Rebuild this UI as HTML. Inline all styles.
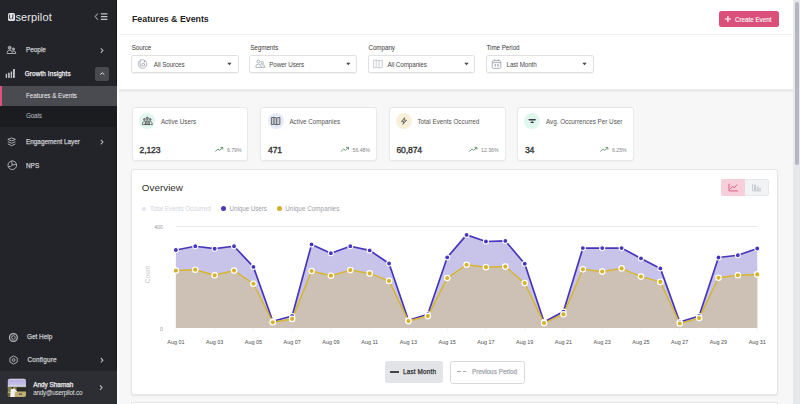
<!DOCTYPE html>
<html><head><meta charset="utf-8">
<style>
*{box-sizing:border-box;margin:0;padding:0}
html,body{width:800px;height:404px;overflow:hidden;background:#f7f7f7;font-family:"Liberation Sans",sans-serif}
.a{position:absolute;white-space:nowrap;line-height:1}
svg.a{overflow:visible}
.nav{position:absolute;white-space:nowrap;line-height:1;left:26px;font-size:6.4px;font-weight:normal;color:#c8c9cd;-webkit-text-stroke:0.25px currentColor}
.lbl{position:absolute;white-space:nowrap;line-height:1;top:45.2px;font-size:6.3px;color:#3a3a3a;letter-spacing:-0.06px}
.sel{position:absolute;top:55.3px;width:107.6px;height:17.4px;border:1px solid #e0e0e0;border-radius:2.5px;background:#fff;box-shadow:0 0.5px 0.8px rgba(0,0,0,0.05)}
.selt{position:absolute;white-space:nowrap;line-height:1;top:62.1px;font-size:6.3px;color:#4a4a4a;letter-spacing:-0.1px}
.tri{position:absolute;top:62.9px;width:0;height:0;border-left:2.2px solid transparent;border-right:2.2px solid transparent;border-top:2.5px solid #454545}
.card{position:absolute;top:107.3px;width:116.7px;height:54px;background:#fff;border-radius:3px;border:1px solid #e8e8e8;box-shadow:0 1px 1.5px rgba(0,0,0,0.04)}
.ic{position:absolute;top:113px;width:16px;height:16px;border-radius:50%}
.tt{position:absolute;white-space:nowrap;line-height:1;top:118.6px;font-size:6.3px;color:#555}
.v{position:absolute;white-space:nowrap;line-height:1;top:146.2px;font-size:8.6px;font-weight:normal;color:#333;letter-spacing:-0.12px;-webkit-text-stroke:0.35px #333}
.pc{position:absolute;white-space:nowrap;line-height:1;top:147.6px;font-size:5.2px;color:#858585}
</style></head><body>

<!-- ============ SIDEBAR ============ -->
<div class="a" style="left:0;top:0;width:117px;height:404px;background:#232429"></div>
<div class="a" style="left:116px;top:0;width:1px;height:404px;background:#16171a"></div>
<div class="a" style="left:117px;top:0;width:2px;height:404px;background:#fdfdfd"></div>

<!-- logo -->
<div class="a" style="left:7.8px;top:12.8px;width:7.4px;height:8px;background:#e4e4e6;border-radius:1.6px"></div>
<svg class="a" style="left:0;top:0" width="30" height="30"><path d="M9.6,14.6 L9.3,18.3 Q10.2,19.6 11.4,18.4 M12.9,14.4 L12.6,19.2" stroke="#2a2b30" stroke-width="0.9" fill="none"/></svg>
<div class="a" style="left:15.4px;top:11.6px;font-size:11px;color:#e6e6e8;letter-spacing:0.12px">serpilot</div>

<!-- collapse icon -->
<svg class="a" style="left:0;top:0" width="117" height="30"><path d="M97.9,13.4 L95.1,16.6 L97.9,19.8" stroke="#c5c5ca" stroke-width="1" fill="none"/>
<path d="M100.9,13.9 H107.4 M100.9,16.6 H107.4 M100.9,19.4 H107.4" stroke="#c5c5ca" stroke-width="1.1" fill="none"/></svg>

<!-- People -->
<svg class="a" style="left:0;top:0" width="20" height="60"><g stroke="#b3b4b9" stroke-width="0.9" fill="none">
<circle cx="9.7" cy="47.8" r="1.5" fill="#8d8e93"/><path d="M7.2,53.5 V52.4 Q7.2,50.2 9.7,50.2 Q12.2,50.2 12.2,52.4 V53.5 Z"/>
<circle cx="13.5" cy="49.1" r="1.1" fill="#8d8e93"/><path d="M12.4,50.9 Q15.9,50.6 15.9,53.5 H12.2"/></g></svg>
<div class="nav" style="top:47.4px">People</div>
<svg class="a" style="left:0;top:0" width="117" height="60"><path d="M100.8,48.4 L102.9,50.6 L100.8,52.8" stroke="#b4b5b9" stroke-width="1.1" fill="none"/></svg>

<!-- Growth Insights -->
<svg class="a" style="left:0;top:0" width="20" height="80"><g fill="#c2c3c8">
<rect x="5.7" y="73.8" width="1.4" height="4.1"/><rect x="8.1" y="72.7" width="1.6" height="5.2"/><rect x="10.7" y="71.5" width="1.4" height="6.4"/><rect x="13" y="69" width="1.9" height="8.9"/></g></svg>
<div class="nav" style="left:24.8px;top:70.6px;color:#ececee;letter-spacing:0.1px">Growth Insights</div>
<div class="a" style="left:95.3px;top:66.6px;width:14px;height:14px;background:#494a50;border-radius:2px"></div>
<svg class="a" style="left:0;top:0" width="117" height="90"><path d="M100.3,74.6 L102.3,72.8 L104.3,74.6" stroke="#e2e2e5" stroke-width="1" fill="none"/></svg>

<!-- Features & Events (active) -->
<div class="a" style="left:0;top:86px;width:117px;height:20px;background:#4a4b51"></div>
<div class="a" style="left:0;top:86px;width:1.6px;height:20px;background:#e0517d"></div>
<div class="nav" style="top:92.6px;color:#f2f2f3;font-size:6.3px;letter-spacing:-0.05px;-webkit-text-stroke:0">Features &amp; Events</div>
<!-- Goals -->
<div class="a" style="left:0;top:106px;width:117px;height:20.6px;background:#1b1c20"></div>
<div class="nav" style="top:113.3px;color:#bfc0c4;font-size:6.3px;letter-spacing:-0.15px;-webkit-text-stroke:0">Goals</div>

<!-- Engagement Layer -->
<svg class="a" style="left:0;top:0" width="20" height="150"><g stroke="#b9babe" stroke-width="0.9" fill="none" stroke-linejoin="round">
<path d="M11.6,137.9 L15.4,139.4 L11.6,140.9 L7.8,139.4 Z"/><path d="M7.8,141.6 L11.6,143.3 L15.4,141.6"/><path d="M7.8,143.9 L11.6,145.7 L15.4,143.9"/></g></svg>
<div class="nav" style="top:139.2px">Engagement Layer</div>
<svg class="a" style="left:0;top:0" width="117" height="150"><path d="M100.8,139.9 L102.9,142.1 L100.8,144.3" stroke="#b4b5b9" stroke-width="1.1" fill="none"/></svg>

<!-- NPS -->
<svg class="a" style="left:0;top:0" width="20" height="175"><g stroke="#b9babe" stroke-width="0.9" fill="none">
<circle cx="12.3" cy="165.2" r="4.3"/><path d="M11.6,161 L12.3,165.2 L16.4,164 M12.3,165.2 Q10.5,167.4 8.4,166.4"/></g></svg>
<div class="nav" style="top:162.6px">NPS</div>

<!-- Get Help -->
<svg class="a" style="left:0;top:0" width="22" height="370"><g stroke="#b9babe" fill="none">
<circle cx="13.4" cy="337.5" r="3.9" stroke-width="1.3"/><circle cx="13.4" cy="337.5" r="1.8" stroke-width="1"/>
<path d="M11.3,335.4 L12.1,336.2 M15.5,335.4 L14.7,336.2 M11.3,339.6 L12.1,338.8 M15.5,339.6 L14.7,338.8" stroke-width="0.8" stroke="#5a5b60"/></g></svg>
<div class="nav" style="left:27px;top:334.4px">Get Help</div>

<!-- Configure -->
<svg class="a" style="left:0;top:0" width="22" height="370"><g stroke="#b9babe" fill="none" stroke-width="0.9">
<path d="M13.6,355.9 L17.3,358 L17.3,362 L13.6,364.1 L9.9,362 L9.9,358 Z"/><circle cx="13.6" cy="360" r="1.4"/></g></svg>
<div class="nav" style="left:27.4px;top:356.9px;letter-spacing:0.18px">Configure</div>
<svg class="a" style="left:0;top:0" width="117" height="370"><path d="M100.8,358 L102.9,360.2 L100.8,362.4" stroke="#b4b5b9" stroke-width="1.1" fill="none"/></svg>

<!-- profile -->
<div class="a" style="left:0;top:371px;width:117px;height:33px;background:#2c2e33"></div>
<svg class="a" style="left:0;top:0" width="40" height="404">
<defs><clipPath id="av"><rect x="7.8" y="378.7" width="18.2" height="18.3" rx="2"/></clipPath>
<linearGradient id="sky" x1="0" y1="0" x2="0" y2="1"><stop offset="0" stop-color="#ecebf6"/><stop offset="0.3" stop-color="#b9b0e3"/><stop offset="0.75" stop-color="#c6c0e6"/><stop offset="1" stop-color="#dfe2ec"/></linearGradient></defs>
<g clip-path="url(#av)">
<rect x="7" y="378" width="20" height="8.6" fill="url(#sky)"/>
<rect x="7" y="386.2" width="20" height="1.2" fill="#c2cbd2"/>
<rect x="7" y="387.3" width="20" height="4.5" fill="#8c8146"/>
<rect x="16.5" y="387.3" width="10" height="4.3" fill="#2b2a24"/>
<rect x="7" y="391.6" width="20" height="6" fill="#c0ad74"/>
<rect x="7" y="393" width="3.5" height="5" fill="#6f6638"/>
<rect x="19" y="393.5" width="3" height="1.2" fill="#5a4d35"/>
<path d="M10.3,397.5 L10.8,389.6 Q12.5,387.6 14.6,388.8 L17.2,391.4 L15.6,392.6 L14.8,390.8 L14.6,397.5 Z" fill="#f2f2f2"/>
<circle cx="12.4" cy="387.9" r="0.9" fill="#3a2a20"/>
</g></svg>
<div class="nav" style="left:33.2px;top:381.5px;color:#ededee">Andy Shamah</div>
<div class="nav" style="left:33.2px;top:389.6px;font-size:6.3px;letter-spacing:-0.19px;color:#e2e2e4;-webkit-text-stroke:0">andy@userpilot.co</div>
<svg class="a" style="left:0;top:0" width="117" height="404"><path d="M100,385.4 L102.1,387.6 L100,389.8" stroke="#b4b5b9" stroke-width="1.1" fill="none"/></svg>

<!-- ============ HEADER ============ -->
<div class="a" style="left:119px;top:0;width:674px;height:35px;background:#fff;border-bottom:1px solid #f1f1f1"></div>
<div class="a" style="left:132px;top:15.2px;font-size:8.8px;font-weight:bold;color:#232323">Features &amp; Events</div>
<div class="a" style="left:719px;top:11px;width:60px;height:16px;background:#da507a;border-radius:2.5px"></div>
<svg class="a" style="left:0;top:0" width="800" height="40"><path d="M727.9,15.9 V22 M724.8,19 H731" stroke="#fff" stroke-width="1.2"/></svg>
<div class="a" style="left:735px;top:17px;font-size:6.3px;color:#fff;letter-spacing:-0.03px;-webkit-text-stroke:0.1px #fff">Create Event</div>

<!-- ============ FILTERS ============ -->
<div class="a" style="left:119px;top:35px;width:674px;height:54px;background:#fff"></div>
<div class="a" style="left:119px;top:89px;width:674px;height:2.5px;background:linear-gradient(#eeeeee,#e7e7e7 50%,#f3f3f3)"></div>
<div class="lbl" style="left:131.7px">Source</div>
<div class="lbl" style="left:250.2px">Segments</div>
<div class="lbl" style="left:368.4px">Company</div>
<div class="lbl" style="left:486.5px">Time Period</div>

<div class="sel" style="left:131.1px"></div>
<div class="sel" style="left:249.4px"></div>
<div class="sel" style="left:367.9px"></div>
<div class="sel" style="left:486px"></div>
<div class="selt" style="left:153.8px">All Sources</div>
<div class="selt" style="left:269.2px">Power Users</div>
<div class="selt" style="left:387.5px">All Companies</div>
<div class="selt" style="left:506.5px">Last Month</div>
<svg class="a" style="left:0;top:0" width="800" height="80"><g fill="#474747"><path d="M227.2,62.7 L231.6,62.7 L229.4,65.3 Z"/><path d="M346.1,62.7 L350.5,62.7 L348.3,65.3 Z"/><path d="M464.3,62.7 L468.7,62.7 L466.5,65.3 Z"/><path d="M582.3,62.7 L586.7,62.7 L584.5,65.3 Z"/></g></svg>
<svg class="a" style="left:0;top:0" width="800" height="90"><g stroke="#a3a8b3" stroke-width="0.85" fill="none">
<circle cx="142.5" cy="64" r="4.3"/><path d="M140.6,60.3 Q139.3,63 140.6,66.8"/><rect x="141.9" y="63.4" width="2.6" height="2.6" rx="0.5"/><circle cx="144.6" cy="61.4" r="0.5" fill="#a3a8b3"/>
<circle cx="258.4" cy="61.5" r="1.5"/><path d="M255.8,67.4 V66.3 Q255.8,64.2 258.4,64.2 Q261,64.2 261,66.3 V67.4 Z"/>
<circle cx="262.4" cy="62.6" r="1.2"/><path d="M261.6,64.6 Q264.8,64.4 264.8,67.4 H261"/>
</g>
<g stroke="#c3c7ce" stroke-width="0.9" fill="none"><path d="M373.5,60.5 L376.2,60 L379,60.8 L382.3,60 V67.6 L379,68 L376.2,67.4 L373.5,67.9 Z M376.2,60 V67.4 M379,60.8 V68"/></g>
<g stroke="#a0a5af" stroke-width="0.9" fill="none"><rect x="492.3" y="60.6" width="8.5" height="7.8" rx="1.3"/><path d="M492.5,62.6 H500.6 M494.7,59.3 V61 M498.5,59.3 V61"/></g>
<g fill="#b3b7bf"><rect x="494.5" y="64" width="1.6" height="2.6"/><rect x="497.2" y="64" width="1.6" height="2.6"/></g>
</svg>

<!-- ============ CARDS ============ -->
<div class="card" style="left:131.7px"></div>
<div class="card" style="left:260.4px"></div>
<div class="card" style="left:388.9px"></div>
<div class="card" style="left:517.2px"></div>
<div class="ic" style="left:139.4px;background:#e0f7ed"></div>
<div class="ic" style="left:267.6px;background:#e8ebf8"></div>
<div class="ic" style="left:395.9px;background:#f8f0d8"></div>
<div class="ic" style="left:524.1px;background:#e0f7ed"></div>
<div class="tt" style="left:160.9px">Active Users</div>
<div class="tt" style="left:289.4px">Active Companies</div>
<div class="tt" style="left:417.4px">Total Events Occurred</div>
<div class="tt" style="left:545.9px">Avg. Occurrences Per User</div>
<div class="v" style="left:139.5px">2,123</div>
<div class="v" style="left:268px">471</div>
<div class="v" style="left:396.4px">60,874</div>
<div class="v" style="left:524.9px">34</div>
<div class="pc" style="left:226.9px">6.79%</div>
<div class="pc" style="left:352.5px">56.48%</div>
<div class="pc" style="left:481px">12.36%</div>
<div class="pc" style="left:612px">6.25%</div>
<svg class="a" style="left:0;top:0" width="800" height="170">
<g fill="#9a9a9c" stroke="#4f5054" stroke-width="0.7">
<circle cx="147.3" cy="118.3" r="1.2"/><circle cx="144.4" cy="119.5" r="0.95"/><circle cx="150.2" cy="119.5" r="0.95"/>
<path d="M142.3,124.5 Q142.3,121.4 144.4,121.4 Q145.6,121.4 146,122.2 M152.3,124.5 Q152.3,121.4 150.2,121.4 Q149,121.4 148.6,122.2" fill="none"/>
<path d="M144.9,124.5 Q144.9,120.6 147.3,120.6 Q149.7,120.6 149.7,124.5 Z"/><path d="M142,124.6 H152.6" fill="none"/>
</g>
<g stroke="#5b5d63" stroke-width="0.9" fill="#c9ccd4"><path d="M271.4,117.6 L274,117.3 L276.6,118 L279.9,117.3 V124.3 L276.6,124.8 L274,124.2 L271.4,124.6 Z"/><path d="M274,117.3 V124.2 M276.6,118 V124.8" fill="none"/></g>
<path d="M404.7,117.7 L401.4,121.6 H404 L402.9,124.3 L406.6,120.2 H403.8 Z" fill="none" stroke="#55565c" stroke-width="0.85" stroke-linejoin="round"/>
<g fill="#3c3d42"><rect x="528.5" y="119.1" width="7.4" height="1.3" rx="0.6"/><path d="M530,123.1 L532.2,120.9 L534.4,123.1 Z"/></g>
<g stroke="#5d8d66" stroke-width="0.9" fill="none" stroke-linejoin="round">
<path d="M215.3,151.4 L218,149 L219.6,150.4 L222.6,147.6 M220.4,147.4 H222.8 V149.6"/>
<path d="M341,151.4 L343.7,149 L345.3,150.4 L348.3,147.6 M346.1,147.4 H348.5 V149.6"/>
<path d="M469.4,151.4 L472.1,149 L473.7,150.4 L476.7,147.6 M474.5,147.4 H476.9 V149.6"/>
<path d="M600.4,151.4 L603.1,149 L604.7,150.4 L607.7,147.6 M605.5,147.4 H607.9 V149.6"/>
</g>
</svg>

<!-- ============ OVERVIEW ============ -->
<div class="a" style="left:131.4px;top:169.4px;width:646.9px;height:225.8px;background:#fff;border-radius:3px;border:1px solid #e6e6e6;box-shadow:0 1px 2px rgba(0,0,0,0.08)"></div>
<div class="a" style="left:141.8px;top:183.2px;font-size:9.9px;color:#333">Overview</div>
<div class="a" style="left:721.4px;top:179.2px;width:47.5px;height:16.5px;background:#f2f3f5;border-radius:2px;border:0.6px solid #e8e9ec"></div>
<div class="a" style="left:721.4px;top:179.2px;width:23.6px;height:16.5px;background:#f7cfdb;border-radius:2px 0 0 2px"></div>
<svg class="a" style="left:0;top:0" width="800" height="200">
<g stroke="#d64f78" stroke-width="0.9" fill="none"><path d="M729,183.8 V190.9 H737.9"/><path d="M730.5,189 L732.6,186.3 L734.3,187.7 L737.1,184.6"/></g>
<g stroke="#c2c6cd" stroke-width="0.9" fill="none"><path d="M752.6,183.8 V190.9 H761"/></g>
<g fill="#c8ccd2"><rect x="754" y="184.6" width="1.9" height="5.8"/><rect x="756.6" y="186.6" width="1.9" height="3.8"/><rect x="759.2" y="187.8" width="1.6" height="2.6"/></g>
</svg>

<div class="a" style="left:142.2px;top:206.5px;width:4px;height:4px;border-radius:50%;background:#e1e3f3"></div>
<div class="a" style="left:150.1px;top:205.9px;font-size:6.3px;letter-spacing:-0.07px;color:#d3d5db">Total Events Occurred</div>
<div class="a" style="left:221px;top:206px;width:5px;height:5px;border-radius:50%;background:#4a3abf"></div>
<div class="a" style="left:229.6px;top:205.9px;font-size:6.3px;letter-spacing:-0.08px;color:#9c9ea8">Unique Users</div>
<div class="a" style="left:277.4px;top:206px;width:5px;height:5px;border-radius:50%;background:#d4b02a"></div>
<div class="a" style="left:285.3px;top:205.9px;font-size:6.3px;letter-spacing:0.03px;color:#9c9ea8">Unique Companies</div>

<!--CHART--><svg class="a" style="left:0;top:0" width="800" height="404" viewBox="0 0 800 404">
<line x1="175.8" y1="226.5" x2="757.2" y2="226.5" stroke="#e9e9e9" stroke-width="1"/>
<line x1="175.90" y1="328.5" x2="175.90" y2="331" stroke="#e6e6e6" stroke-width="0.6"/><line x1="214.66" y1="328.5" x2="214.66" y2="331" stroke="#e6e6e6" stroke-width="0.6"/><line x1="253.41" y1="328.5" x2="253.41" y2="331" stroke="#e6e6e6" stroke-width="0.6"/><line x1="292.17" y1="328.5" x2="292.17" y2="331" stroke="#e6e6e6" stroke-width="0.6"/><line x1="330.93" y1="328.5" x2="330.93" y2="331" stroke="#e6e6e6" stroke-width="0.6"/><line x1="369.68" y1="328.5" x2="369.68" y2="331" stroke="#e6e6e6" stroke-width="0.6"/><line x1="408.44" y1="328.5" x2="408.44" y2="331" stroke="#e6e6e6" stroke-width="0.6"/><line x1="447.20" y1="328.5" x2="447.20" y2="331" stroke="#e6e6e6" stroke-width="0.6"/><line x1="485.95" y1="328.5" x2="485.95" y2="331" stroke="#e6e6e6" stroke-width="0.6"/><line x1="524.71" y1="328.5" x2="524.71" y2="331" stroke="#e6e6e6" stroke-width="0.6"/><line x1="563.47" y1="328.5" x2="563.47" y2="331" stroke="#e6e6e6" stroke-width="0.6"/><line x1="602.22" y1="328.5" x2="602.22" y2="331" stroke="#e6e6e6" stroke-width="0.6"/><line x1="640.98" y1="328.5" x2="640.98" y2="331" stroke="#e6e6e6" stroke-width="0.6"/><line x1="679.74" y1="328.5" x2="679.74" y2="331" stroke="#e6e6e6" stroke-width="0.6"/><line x1="718.49" y1="328.5" x2="718.49" y2="331" stroke="#e6e6e6" stroke-width="0.6"/><line x1="757.25" y1="328.5" x2="757.25" y2="331" stroke="#e6e6e6" stroke-width="0.6"/>
<path d="M175.90,250.00 L195.28,246.25 L214.66,248.70 L234.04,246.25 L253.41,266.90 L272.79,321.30 L292.17,316.00 L311.55,244.40 L330.93,253.20 L350.31,246.25 L369.68,250.40 L389.06,263.50 L408.44,320.30 L427.82,314.20 L447.20,257.40 L466.58,234.90 L485.95,241.50 L505.33,240.90 L524.71,263.80 L544.09,322.00 L563.47,311.60 L582.85,248.10 L602.22,248.10 L621.60,248.10 L640.98,258.40 L660.36,268.40 L679.74,322.00 L699.12,316.00 L718.49,257.50 L737.87,255.25 L757.25,248.50 L757.25,328 L175.90,328 Z" fill="#c8c3e9"/><path d="M175.90,270.60 L195.28,269.70 L214.66,275.30 L234.04,270.60 L253.41,283.75 L272.79,322.30 L292.17,318.90 L311.55,271.00 L330.93,275.70 L350.31,270.10 L369.68,273.40 L389.06,280.90 L408.44,321.10 L427.82,316.10 L447.20,278.10 L466.58,264.75 L485.95,267.20 L505.33,266.60 L524.71,283.10 L544.09,323.10 L563.47,314.30 L582.85,269.30 L602.22,271.60 L621.60,268.40 L640.98,276.60 L660.36,281.90 L679.74,323.50 L699.12,318.10 L718.49,277.75 L737.87,275.30 L757.25,274.40 L757.25,328 L175.90,328 Z" fill="#cdc1b5"/><path d="M175.90,250.00 L195.28,246.25 L214.66,248.70 L234.04,246.25 L253.41,266.90 L272.79,321.30 L292.17,316.00 L311.55,244.40 L330.93,253.20 L350.31,246.25 L369.68,250.40 L389.06,263.50 L408.44,320.30 L427.82,314.20 L447.20,257.40 L466.58,234.90 L485.95,241.50 L505.33,240.90 L524.71,263.80 L544.09,322.00 L563.47,311.60 L582.85,248.10 L602.22,248.10 L621.60,248.10 L640.98,258.40 L660.36,268.40 L679.74,322.00 L699.12,316.00 L718.49,257.50 L737.87,255.25 L757.25,248.50" fill="none" stroke="#4636bb" stroke-width="1.7" stroke-linejoin="round"/><path d="M175.90,270.60 L195.28,269.70 L214.66,275.30 L234.04,270.60 L253.41,283.75 L272.79,322.30 L292.17,318.90 L311.55,271.00 L330.93,275.70 L350.31,270.10 L369.68,273.40 L389.06,280.90 L408.44,321.10 L427.82,316.10 L447.20,278.10 L466.58,264.75 L485.95,267.20 L505.33,266.60 L524.71,283.10 L544.09,323.10 L563.47,314.30 L582.85,269.30 L602.22,271.60 L621.60,268.40 L640.98,276.60 L660.36,281.90 L679.74,323.50 L699.12,318.10 L718.49,277.75 L737.87,275.30 L757.25,274.40" fill="none" stroke="#d8b62c" stroke-width="1.5" stroke-linejoin="round"/><circle cx="175.90" cy="250.00" r="2.5" fill="#4636bb" stroke="#fff" stroke-width="1.1"/><circle cx="195.28" cy="246.25" r="2.5" fill="#4636bb" stroke="#fff" stroke-width="1.1"/><circle cx="214.66" cy="248.70" r="2.5" fill="#4636bb" stroke="#fff" stroke-width="1.1"/><circle cx="234.04" cy="246.25" r="2.5" fill="#4636bb" stroke="#fff" stroke-width="1.1"/><circle cx="253.41" cy="266.90" r="2.5" fill="#4636bb" stroke="#fff" stroke-width="1.1"/><circle cx="272.79" cy="321.30" r="2.5" fill="#4636bb" stroke="#fff" stroke-width="1.1"/><circle cx="292.17" cy="316.00" r="2.5" fill="#4636bb" stroke="#fff" stroke-width="1.1"/><circle cx="311.55" cy="244.40" r="2.5" fill="#4636bb" stroke="#fff" stroke-width="1.1"/><circle cx="330.93" cy="253.20" r="2.5" fill="#4636bb" stroke="#fff" stroke-width="1.1"/><circle cx="350.31" cy="246.25" r="2.5" fill="#4636bb" stroke="#fff" stroke-width="1.1"/><circle cx="369.68" cy="250.40" r="2.5" fill="#4636bb" stroke="#fff" stroke-width="1.1"/><circle cx="389.06" cy="263.50" r="2.5" fill="#4636bb" stroke="#fff" stroke-width="1.1"/><circle cx="408.44" cy="320.30" r="2.5" fill="#4636bb" stroke="#fff" stroke-width="1.1"/><circle cx="427.82" cy="314.20" r="2.5" fill="#4636bb" stroke="#fff" stroke-width="1.1"/><circle cx="447.20" cy="257.40" r="2.5" fill="#4636bb" stroke="#fff" stroke-width="1.1"/><circle cx="466.58" cy="234.90" r="2.5" fill="#4636bb" stroke="#fff" stroke-width="1.1"/><circle cx="485.95" cy="241.50" r="2.5" fill="#4636bb" stroke="#fff" stroke-width="1.1"/><circle cx="505.33" cy="240.90" r="2.5" fill="#4636bb" stroke="#fff" stroke-width="1.1"/><circle cx="524.71" cy="263.80" r="2.5" fill="#4636bb" stroke="#fff" stroke-width="1.1"/><circle cx="544.09" cy="322.00" r="2.5" fill="#4636bb" stroke="#fff" stroke-width="1.1"/><circle cx="563.47" cy="311.60" r="2.5" fill="#4636bb" stroke="#fff" stroke-width="1.1"/><circle cx="582.85" cy="248.10" r="2.5" fill="#4636bb" stroke="#fff" stroke-width="1.1"/><circle cx="602.22" cy="248.10" r="2.5" fill="#4636bb" stroke="#fff" stroke-width="1.1"/><circle cx="621.60" cy="248.10" r="2.5" fill="#4636bb" stroke="#fff" stroke-width="1.1"/><circle cx="640.98" cy="258.40" r="2.5" fill="#4636bb" stroke="#fff" stroke-width="1.1"/><circle cx="660.36" cy="268.40" r="2.5" fill="#4636bb" stroke="#fff" stroke-width="1.1"/><circle cx="679.74" cy="322.00" r="2.5" fill="#4636bb" stroke="#fff" stroke-width="1.1"/><circle cx="699.12" cy="316.00" r="2.5" fill="#4636bb" stroke="#fff" stroke-width="1.1"/><circle cx="718.49" cy="257.50" r="2.5" fill="#4636bb" stroke="#fff" stroke-width="1.1"/><circle cx="737.87" cy="255.25" r="2.5" fill="#4636bb" stroke="#fff" stroke-width="1.1"/><circle cx="757.25" cy="248.50" r="2.5" fill="#4636bb" stroke="#fff" stroke-width="1.1"/><circle cx="175.90" cy="270.60" r="2.7" fill="#d5b32a" stroke="#fff" stroke-width="1.2"/><circle cx="195.28" cy="269.70" r="2.7" fill="#d5b32a" stroke="#fff" stroke-width="1.2"/><circle cx="214.66" cy="275.30" r="2.7" fill="#d5b32a" stroke="#fff" stroke-width="1.2"/><circle cx="234.04" cy="270.60" r="2.7" fill="#d5b32a" stroke="#fff" stroke-width="1.2"/><circle cx="253.41" cy="283.75" r="2.7" fill="#d5b32a" stroke="#fff" stroke-width="1.2"/><circle cx="272.79" cy="322.30" r="2.7" fill="#d5b32a" stroke="#fff" stroke-width="1.2"/><circle cx="292.17" cy="318.90" r="2.7" fill="#d5b32a" stroke="#fff" stroke-width="1.2"/><circle cx="311.55" cy="271.00" r="2.7" fill="#d5b32a" stroke="#fff" stroke-width="1.2"/><circle cx="330.93" cy="275.70" r="2.7" fill="#d5b32a" stroke="#fff" stroke-width="1.2"/><circle cx="350.31" cy="270.10" r="2.7" fill="#d5b32a" stroke="#fff" stroke-width="1.2"/><circle cx="369.68" cy="273.40" r="2.7" fill="#d5b32a" stroke="#fff" stroke-width="1.2"/><circle cx="389.06" cy="280.90" r="2.7" fill="#d5b32a" stroke="#fff" stroke-width="1.2"/><circle cx="408.44" cy="321.10" r="2.7" fill="#d5b32a" stroke="#fff" stroke-width="1.2"/><circle cx="427.82" cy="316.10" r="2.7" fill="#d5b32a" stroke="#fff" stroke-width="1.2"/><circle cx="447.20" cy="278.10" r="2.7" fill="#d5b32a" stroke="#fff" stroke-width="1.2"/><circle cx="466.58" cy="264.75" r="2.7" fill="#d5b32a" stroke="#fff" stroke-width="1.2"/><circle cx="485.95" cy="267.20" r="2.7" fill="#d5b32a" stroke="#fff" stroke-width="1.2"/><circle cx="505.33" cy="266.60" r="2.7" fill="#d5b32a" stroke="#fff" stroke-width="1.2"/><circle cx="524.71" cy="283.10" r="2.7" fill="#d5b32a" stroke="#fff" stroke-width="1.2"/><circle cx="544.09" cy="323.10" r="2.7" fill="#d5b32a" stroke="#fff" stroke-width="1.2"/><circle cx="563.47" cy="314.30" r="2.7" fill="#d5b32a" stroke="#fff" stroke-width="1.2"/><circle cx="582.85" cy="269.30" r="2.7" fill="#d5b32a" stroke="#fff" stroke-width="1.2"/><circle cx="602.22" cy="271.60" r="2.7" fill="#d5b32a" stroke="#fff" stroke-width="1.2"/><circle cx="621.60" cy="268.40" r="2.7" fill="#d5b32a" stroke="#fff" stroke-width="1.2"/><circle cx="640.98" cy="276.60" r="2.7" fill="#d5b32a" stroke="#fff" stroke-width="1.2"/><circle cx="660.36" cy="281.90" r="2.7" fill="#d5b32a" stroke="#fff" stroke-width="1.2"/><circle cx="679.74" cy="323.50" r="2.7" fill="#d5b32a" stroke="#fff" stroke-width="1.2"/><circle cx="699.12" cy="318.10" r="2.7" fill="#d5b32a" stroke="#fff" stroke-width="1.2"/><circle cx="718.49" cy="277.75" r="2.7" fill="#d5b32a" stroke="#fff" stroke-width="1.2"/><circle cx="737.87" cy="275.30" r="2.7" fill="#d5b32a" stroke="#fff" stroke-width="1.2"/><circle cx="757.25" cy="274.40" r="2.7" fill="#d5b32a" stroke="#fff" stroke-width="1.2"/>
<g font-family="Liberation Sans" font-size="5.45" fill="#4d4d4d"><text x="175.90" y="343.5" text-anchor="middle">Aug 01</text><text x="214.66" y="343.5" text-anchor="middle">Aug 03</text><text x="253.41" y="343.5" text-anchor="middle">Aug 05</text><text x="292.17" y="343.5" text-anchor="middle">Aug 07</text><text x="330.93" y="343.5" text-anchor="middle">Aug 09</text><text x="369.68" y="343.5" text-anchor="middle">Aug 11</text><text x="408.44" y="343.5" text-anchor="middle">Aug 13</text><text x="447.20" y="343.5" text-anchor="middle">Aug 15</text><text x="485.95" y="343.5" text-anchor="middle">Aug 17</text><text x="524.71" y="343.5" text-anchor="middle">Aug 19</text><text x="563.47" y="343.5" text-anchor="middle">Aug 21</text><text x="602.22" y="343.5" text-anchor="middle">Aug 23</text><text x="640.98" y="343.5" text-anchor="middle">Aug 25</text><text x="679.74" y="343.5" text-anchor="middle">Aug 27</text><text x="718.49" y="343.5" text-anchor="middle">Aug 29</text><text x="757.25" y="343.5" text-anchor="middle">Aug 31</text></g>
<g font-family="Liberation Sans" font-size="5.3" fill="#9d9d9d"><text x="158.6" y="229" text-anchor="middle">400</text><text x="161.4" y="330.5" text-anchor="middle">0</text></g>
<text transform="translate(149.5,274.5) rotate(-90)" text-anchor="middle" font-family="Liberation Sans" font-size="6.3" fill="#c2c2c2">Count</text>
</svg><!--/CHART-->

<!-- bottom legend buttons -->
<div class="a" style="left:385px;top:360.5px;width:58px;height:22.6px;background:#e3e4e8;border-radius:2.5px"></div>
<div class="a" style="left:390px;top:370.6px;width:9px;height:2px;background:#444"></div>
<div class="a" style="left:403px;top:369px;font-size:6.4px;color:#333;letter-spacing:0.15px;-webkit-text-stroke:0.25px #333">Last Month</div>
<div class="a" style="left:450.4px;top:360.5px;width:75px;height:23px;background:#fff;border-radius:2.5px;border:1px solid #d9dade"></div>
<div class="a" style="left:457px;top:371px;width:3.5px;height:1.2px;background:#a8abb2"></div>
<div class="a" style="left:462.5px;top:371px;width:3.5px;height:1.2px;background:#a8abb2"></div>
<div class="a" style="left:472px;top:369px;font-size:6.4px;color:#a5a8af;-webkit-text-stroke:0.25px #a5a8af">Previous Period</div>

<!-- next card peek -->
<div class="a" style="left:131.4px;top:401.5px;width:646.9px;height:2.5px;background:#fff;border-radius:3px 3px 0 0;border:1px solid #e6e6e6;border-bottom:none"></div>

<!-- scrollbar -->
<div class="a" style="left:793px;top:0;width:7px;height:404px;background:#e6e8eb"></div>
<div class="a" style="left:794.8px;top:2px;width:4px;height:162.5px;background:#b2b7c0;border-radius:2px"></div>
</body></html>
